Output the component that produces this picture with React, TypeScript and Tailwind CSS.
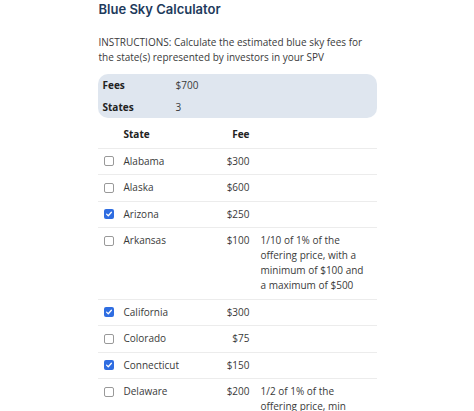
import React from "react"

interface StateFee {
  name: string
  fee: string
  checked: boolean
  note?: string
}

const states: StateFee[] = [
  { name: "Alabama", fee: "$300", checked: false },
  { name: "Alaska", fee: "$600", checked: false },
  { name: "Arizona", fee: "$250", checked: true },
  {
    name: "Arkansas",
    fee: "$100",
    checked: false,
    note: "1/10 of 1% of the offering price, with a minimum of $100 and a maximum of $500",
  },
  { name: "California", fee: "$300", checked: true },
  { name: "Colorado", fee: "$75", checked: false },
  { name: "Connecticut", fee: "$150", checked: true },
  {
    name: "Delaware",
    fee: "$200",
    checked: false,
    note: "1/2 of 1% of the offering price, min $200, max $1,000",
  },
]

function Checkbox({ checked }: { checked: boolean }) {
  if (checked) {
    return (
      <span className="mt-[2.5px] flex h-[10px] w-[10px] items-center justify-center rounded-[2px] bg-[#2f6de1]">
        <svg viewBox="0 0 10 10" className="h-[8px] w-[8px]">
          <path d="M2 5.2 L4.1 7.2 L8 2.8" fill="none" stroke="white" strokeWidth="1.6" strokeLinecap="round" strokeLinejoin="round" />
        </svg>
      </span>
    )
  }
  return <span className="mt-[2.5px] block h-[10px] w-[10px] rounded-[2px] border border-[#999] bg-white" />
}

export default function App() {
  return (
    <div className="min-h-screen bg-white font-['Open_Sans',sans-serif] text-[#3a3a3a]">
      <div className="mx-auto w-[279px]">
        {/* Title */}
        <h1 className="pl-[1px] font-['Inter',sans-serif] text-[13px] font-semibold leading-[19px] text-[#1e3a5c]">
          Blue Sky Calculator
        </h1>

        <p className="mt-[16px] pl-[1px] text-[10px] leading-[14.5px]">
          INSTRUCTIONS: Calculate the estimated blue sky fees for the state(s) represented by investors in your SPV
        </p>

        {/* Totals */}
        <div className="mt-[10px] rounded-[10px] bg-[#dfe6ef] pl-[5px] text-[10px]">
          <div className="flex h-[22px] items-center">
            <span className="w-[73px] font-bold text-[#222]">Fees</span>
            <span>$700</span>
          </div>
          <div className="flex h-[22px] items-center">
            <span className="w-[73px] font-bold text-[#222]">States</span>
            <span>3</span>
          </div>
        </div>

        {/* Table */}
        <div className="mt-[4px] text-[10px] leading-[15px]">
          <div className="flex border-b border-[#ececec] py-[5.25px] font-bold text-[#222]">
            <div className="w-[26px]" />
            <div className="w-[86px]">State</div>
            <div className="w-[40px] text-right">Fee</div>
          </div>
          {states.map((s) => (
            <div key={s.name} className="flex items-start border-b border-[#ececec] py-[5.25px]">
              <div className="flex w-[26px] pl-[6px]">
                <Checkbox checked={s.checked} />
              </div>
              <div className="w-[86px]">{s.name}</div>
              <div className="w-[40px] text-right">{s.fee}</div>
              {s.note && <div className="ml-[11px] w-[106px]">{s.note}</div>}
            </div>
          ))}
        </div>
      </div>
    </div>
  )
}
